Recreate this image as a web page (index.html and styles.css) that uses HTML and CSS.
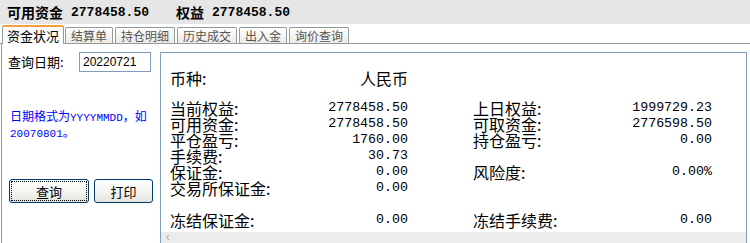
FILE: index.html
```html
<!DOCTYPE html>
<html lang="zh">
<head>
    <meta charset="UTF-8">
    <title>资金状况</title>
    <link rel="stylesheet" href="styles.css">
</head>
<body>
    <div class="topbar">
        <span>可用资金</span><span class="num">2778458.50</span>
        <span class="cap">权益</span><span class="num">2778458.50</span>
    </div>

    <div class="tabs">
        <div class="tab active">资金状况</div>
        <div class="tab">结算单</div>
        <div class="tab">持仓明细</div>
        <div class="tab">历史成交</div>
        <div class="tab">出入金</div>
        <div class="tab">询价查询</div>
    </div>

    <div class="page">
        <div class="side">
            <div class="date-row">
                <label class="date-label">查询日期:</label>
                <input class="date" type="text" value="20220721">
            </div>
            <p class="hint">日期格式为<span class="mono">YYYYMMDD</span>，如<br><span class="mono">20070801</span>。</p>
            <div class="buttons">
                <button class="btn btn-query">查询</button>
                <button class="btn btn-print">打印</button>
            </div>
        </div>

        <div class="report">
            <div class="rows">
                <div class="cell"><span>币种:</span><span>人民币</span></div>
                <div class="cell"></div>

                <div class="cell"><span>当前权益:</span><span class="val">2778458.50</span></div>
                <div class="cell"><span>上日权益:</span><span class="val">1999729.23</span></div>

                <div class="cell"><span>可用资金:</span><span class="val">2778458.50</span></div>
                <div class="cell"><span>可取资金:</span><span class="val">2776598.50</span></div>

                <div class="cell"><span>平仓盈亏:</span><span class="val">1760.00</span></div>
                <div class="cell"><span>持仓盈亏:</span><span class="val">0.00</span></div>

                <div class="cell"><span>手续费:</span><span class="val">30.73</span></div>
                <div class="cell"></div>

                <div class="cell"><span>保证金:</span><span class="val">0.00</span></div>
                <div class="cell"><span>风险度:</span><span class="val">0.00%</span></div>

                <div class="cell"><span>交易所保证金:</span><span class="val">0.00</span></div>
                <div class="cell"></div>

                <!-- fila vacía -->
                <div class="cell"></div>
                <div class="cell"></div>

                <div class="cell"><span>冻结保证金:</span><span class="val">0.00</span></div>
                <div class="cell"><span>冻结手续费:</span><span class="val">0.00</span></div>
            </div>
            <div class="hscroll"><span class="arrow">‹</span></div>
        </div>
    </div>
</body>
</html>
```

FILE: styles.css
```css
* {
    box-sizing: border-box;
}
body {
    margin: 0;
    width: 750px;
    height: 243px;
    overflow: hidden;
    background: #fff;
    color: #000;
    font-family: "Noto Sans CJK SC", sans-serif;
}

/* barra superior */
.topbar {
    height: 24px;
    background: #e6e6e6;
    padding-left: 7px;
    display: flex;
    align-items: center;
    font-size: 14px;
    font-weight: bold;
}
.topbar .num {
    font-family: "Liberation Mono", monospace;
    font-size: 13px;
    margin-left: 8px;
}
.topbar .cap {
    margin-left: 27px;
}

/* pestañas */
.tabs {
    height: 20px;
    display: flex;
    align-items: flex-end;
    padding-left: 2px;
    border-bottom: 1px solid #919b9c;
}
.tab {
    height: 16px;
    margin-right: 2px;
    padding: 0 5px;
    border: 1px solid #919b9c;
    border-bottom: none;
    border-radius: 2px 2px 0 0;
    background: linear-gradient(#ffffff, #ecebe6);
    color: #555;
    font-size: 12px;
    line-height: 15px;
}
.tab.active {
    height: 19px;
    margin-right: 1px;
    margin-bottom: -1px;
    padding: 0 4px;
    border-top: 2px solid #f2a13b;
    background: #fff;
    color: #000;
    font-size: 13px;
    line-height: 17px;
}

/* contenido */
.page {
    display: flex;
    height: 199px;
    margin-left: 1px;
    border-left: 1px solid #919b9c;
}
.side {
    width: 158px;
    padding-left: 6px;
}
.date-row {
    display: flex;
    margin-top: 8px;
    height: 20px;
}
.date-label {
    width: 71px;
    font-size: 13px;
    line-height: 20px;
}
.date {
    width: 72px;
    height: 20px;
    border: 1px solid #7f9db9;
    padding: 0 3px;
    font-family: "Liberation Sans", sans-serif;
    font-size: 12px;
    color: #000;
}
.hint {
    margin: 37px 0 0 2px;
    color: #0000ff;
    font-size: 12px;
    line-height: 13px;
}
.hint .mono {
    font-family: "Liberation Mono", monospace;
    font-size: 11px;
}
.buttons {
    display: flex;
    gap: 5px;
    margin-top: 38px;
    padding-left: 1px;
}
.btn {
    height: 24px;
    border: 1px solid #003c74;
    border-radius: 3px;
    background: linear-gradient(#ffffff, #f3f3ef 60%, #e3e2da);
    font-family: "Noto Sans CJK SC", sans-serif;
    font-size: 13px;
    color: #000;
    padding: 0;
}
.btn-query {
    width: 80px;
    outline: 1px dotted #000;
    outline-offset: -3px;
}
.btn-print {
    width: 59px;
}

/* informe */
.report {
    width: 587px;
    height: 200px;
    margin-top: 8px;
    border: 1px solid #7f9db9;
    display: flex;
    flex-direction: column;
}
.rows {
    height: 179px;
    flex-shrink: 0;
    padding: 17px 0 0 9px;
    display: grid;
    grid-template-columns: 238px 239px;
    grid-template-rows: 30px;
    grid-auto-rows: 16px;
    column-gap: 65px;
    font-size: 16px;
    line-height: 16px;
}
.cell {
    display: flex;
    justify-content: space-between;
    white-space: nowrap;
}
.val {
    font-family: "Liberation Mono", monospace;
    font-size: 13.3px;
}
.hscroll {
    height: 17px;
    flex-shrink: 0;
    background: #ececec;
    padding-left: 4px;
}
.arrow {
    display: block;
    color: #b0b0b0;
    font-family: "DejaVu Sans", sans-serif;
    font-size: 13px;
    line-height: 9px;
}
```
